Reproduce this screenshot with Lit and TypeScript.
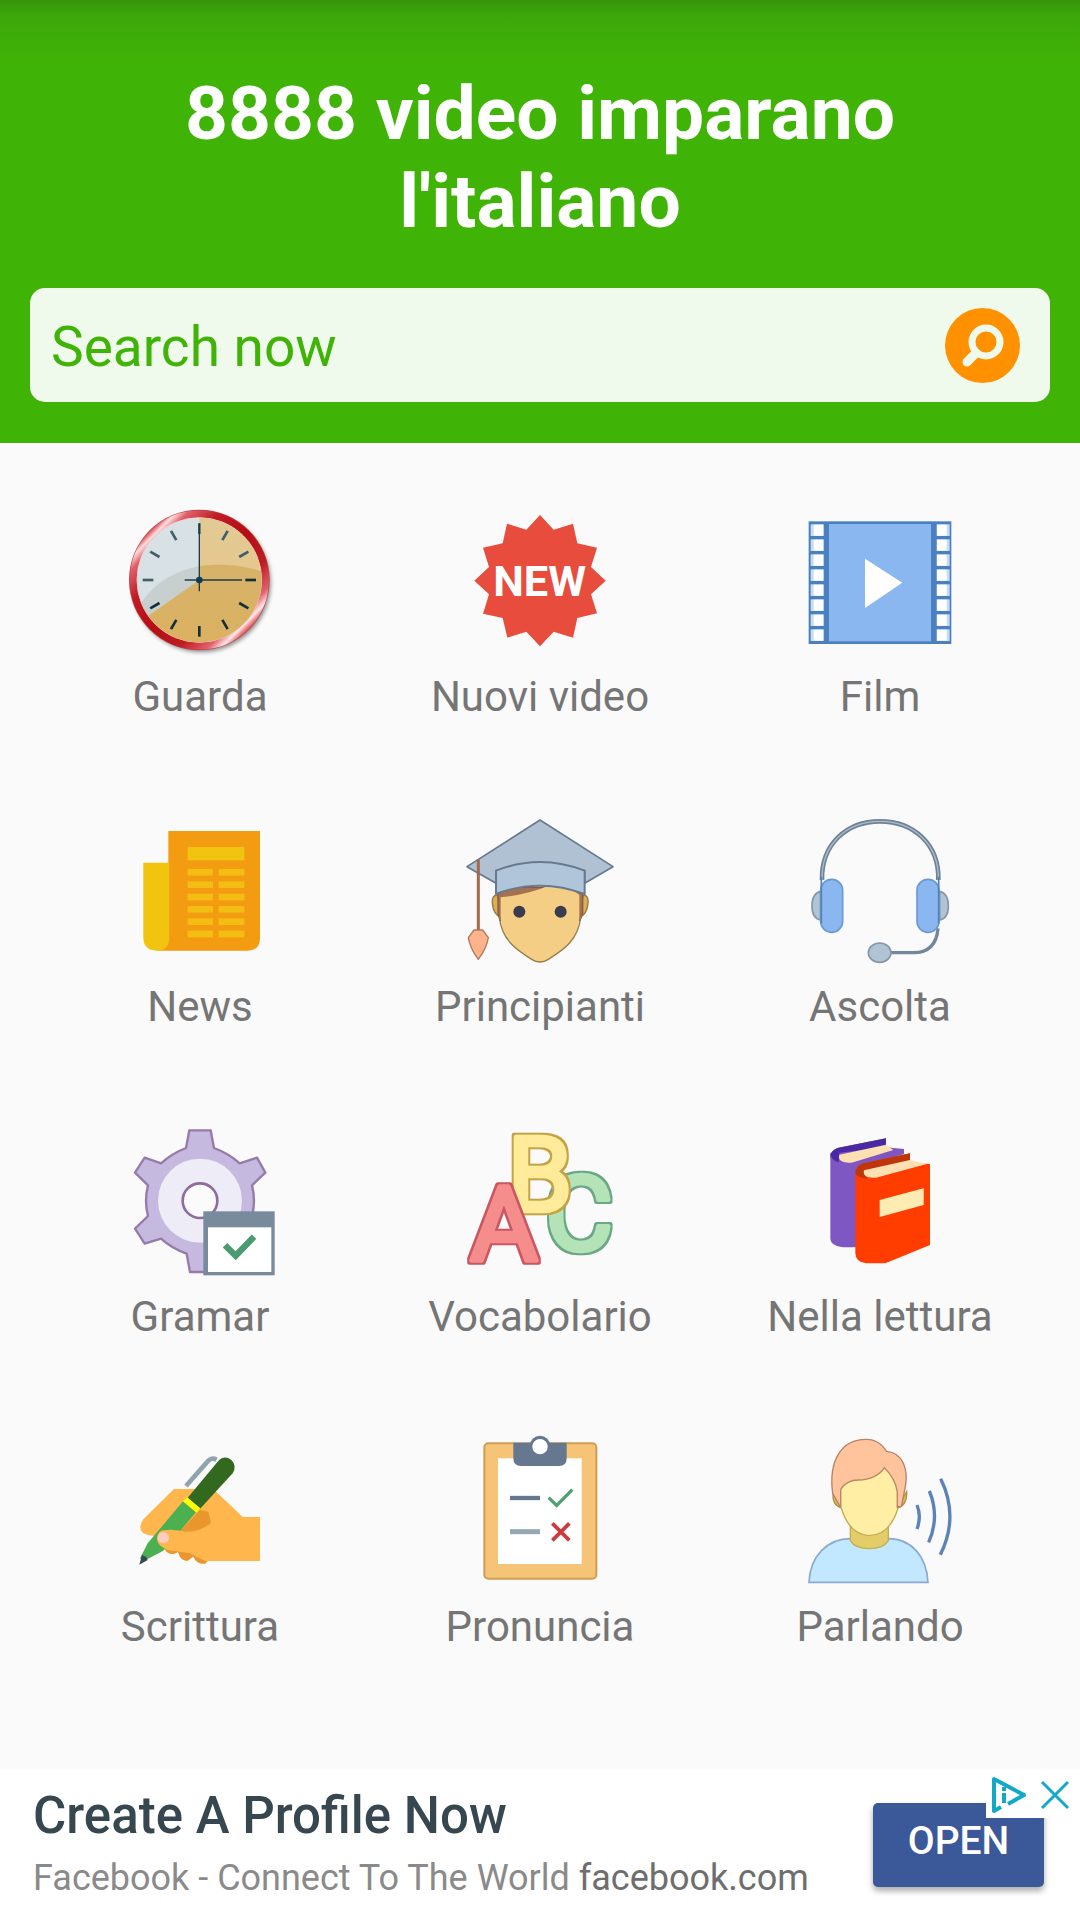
import { LitElement, html, css, svg, SVGTemplateResult } from "lit";
import { customElement } from "lit/decorators.js";

interface Topic {
  label: string;
  art: SVGTemplateResult;
}

const hours = [0, 30, 60, 90, 120, 150, 180, 210, 240, 270, 300, 330];

const clock = svg`
  <defs>
    <linearGradient id="rim" x1="0" y1="0" x2="1" y2="1">
      <stop offset=".13" stop-color="#e2606a"/><stop offset=".155" stop-color="#ffdede"/>
      <stop offset=".2" stop-color="#e0606a"/><stop offset=".32" stop-color="#c01c24"/>
      <stop offset=".5" stop-color="#b50d14"/><stop offset=".68" stop-color="#c01c24"/>
      <stop offset=".79" stop-color="#e0606a"/><stop offset=".84" stop-color="#ffe8e8"/>
      <stop offset=".87" stop-color="#e2606a"/>
    </linearGradient>
    <linearGradient id="sand" x1="0" y1="0" x2="0" y2="1">
      <stop offset="0" stop-color="#d9b873"/><stop offset="1" stop-color="#e3b663"/>
    </linearGradient>
    <filter id="soft" x="-20%" y="-20%" width="140%" height="140%"><feGaussianBlur stdDeviation="6"/></filter>
    <clipPath id="dial"><circle cx="298" cy="270" r="187"/></clipPath>
  </defs>
  <circle cx="304" cy="278" r="208" fill="#000" opacity=".45" filter="url(#soft)"/>
  <circle cx="298" cy="270" r="211" fill="#b9474c"/>
  <circle cx="298" cy="270" r="197" fill="none" stroke="url(#rim)" stroke-width="23"/>
  <circle cx="298" cy="270" r="187" fill="#ccd8de" stroke="#f3c9c9" stroke-width="3"/>
  <g clip-path="url(#dial)">
    <path d="M298 270V70H500V470H200L144 378Z" fill="url(#sand)"/>
    <path d="M100 380C150 270 250 225 350 224C400 224 450 230 500 250V60H100Z" fill="#fff" opacity=".24"/>
    <path d="M100 380C150 270 250 225 350 224C400 224 450 230 500 250V480H100Z" fill="#a08a50" opacity=".1"/>
  </g>
  ${hours.map(a => svg`<path d="M298 100V132" transform="rotate(${a} 298 270)" stroke="${a > 260 || a < 80 ? "#3f6068" : "#13303a"}" stroke-width="8"/>`)}
  <path d="M298 100V304M254 270H426" stroke="#1c3c48" stroke-width="4" fill="none"/>
  <circle cx="298" cy="270" r="10" fill="#0d3a55"/>`;

const starPoints = Array.from({ length: 24 }, (_, i) => {
  const r = i % 2 ? 158 : 197;
  const a = (i * Math.PI) / 12;
  return `${Math.round(300 + r * Math.sin(a))},${Math.round(272 - r * Math.cos(a))}`;
}).join(" ");

const fresh = svg`
  <polygon points="${starPoints}" fill="#e74c3c"/>
  <text x="299" y="319" text-anchor="middle" font-family="Roboto, sans-serif" font-weight="700" font-size="130" fill="#fff">NEW</text>`;

const film = svg`
  <rect x="86" y="94" width="428" height="368" fill="#4a80be"/>
  <rect x="147" y="102" width="306" height="352" fill="#8bb7f0"/>
  ${[0, 1, 2, 3, 4, 5, 6, 7].map(i => svg`
    <rect x="92" y="${103 + i * 45}" width="39" height="35" fill="#c8dcf3"/><rect x="101" y="${104 + i * 45}" width="29" height="33" fill="#fff"/>
    <rect x="470" y="${103 + i * 45}" width="39" height="35" fill="#c8dcf3"/><rect x="471" y="${104 + i * 45}" width="29" height="33" fill="#fff"/>`)}
  <path d="M255 206L367 278L255 354Z" fill="#fff"/>`;

const news = svg`
  <path d="M205 93H480V414Q480 452 442 452H170L205 400Z" fill="#f39c12"/>
  <path d="M130 188H208V412Q208 452 170 452Q130 452 130 412Z" fill="#f1c40f"/>
  <rect x="263" y="141" width="170" height="40" fill="#f1c40f"/>
  ${[0, 1, 2, 3, 4, 5].map(i => svg`
    <rect x="263" y="${207 + i * 37}" width="76" height="20" fill="#f3bd13"/>
    <rect x="356" y="${207 + i * 37}" width="77" height="20" fill="#f3bd13"/>`)}`;

const student = svg`
  <path d="M172 285Q155 285 157 310Q160 345 184 352ZM430 285Q446 285 444 310Q441 345 417 352Z" fill="#dbb052" stroke="#957c49" stroke-width="4"/>
  <path d="M174 262H428V340L420 362H180L174 340Z" fill="#a6714e" stroke="#8a5a40" stroke-width="4"/>
  <path d="M182 292Q260 285 330 256Q390 258 418 285V350C416 420 370 450 325 478Q300 494 275 478C230 450 186 420 182 350Z" fill="#f5ce85"/>
  <path d="M178 350C184 420 230 450 275 478Q300 494 325 478C370 450 416 420 422 350" fill="none" stroke="#957c49" stroke-width="4"/>
  <circle cx="238" cy="335" r="18" fill="#3a3c4e"/><circle cx="362" cy="335" r="18" fill="#3a3c4e"/>
  <path d="M300 60L519 200L434 250V212H168V250L81 200Z" fill="#b0c1d4" stroke="#66798f" stroke-width="5" stroke-linejoin="round"/>
  <path d="M168 212Q300 160 434 212V282Q300 232 168 282Z" fill="#b0c5d9" stroke="#66798f" stroke-width="6" stroke-linejoin="round"/>
  <path d="M115 178V390" stroke="#a16a4a" stroke-width="9"/>
  <path d="M102 390H128L145 413Q140 445 115 478Q90 445 85 413Z" fill="#ffb38a" stroke="#b07a5c" stroke-width="4" stroke-linejoin="round"/>`;

const headset = svg`
  <path d="M126 240C124 132 200 64 300 64S478 132 475 240" fill="none" stroke="#6f8296" stroke-width="14"/>
  <path d="M126 240C124 132 200 64 300 64S478 132 475 240" fill="none" stroke="#a9bccd" stroke-width="4"/>
  <path d="M122 274Q96 280 96 318T122 360ZM479 274Q505 280 505 318T479 360Z" fill="#b0c4d6" stroke="#8597a9" stroke-width="5"/>
  <rect x="122" y="238" width="66" height="159" rx="33" fill="#8bb7f0" stroke="#6a9ad6" stroke-width="5"/>
  <rect x="411" y="238" width="66" height="159" rx="33" fill="#8bb7f0" stroke="#6a9ad6" stroke-width="5"/>
  <path d="M124 230V370M476 230V370" stroke="#5580b4" stroke-width="5"/>
  <path d="M474 385Q468 458 400 458H328" fill="none" stroke="#73879a" stroke-width="10"/>
  <ellipse cx="299" cy="458" rx="34" ry="29" fill="#b0c4d6" stroke="#8597a9" stroke-width="5"/>`;

const grammar = svg`
  <path d="M268 61H332L342 114Q386 130 419 160L471 143L496 188L456 226Q468 272 456 318L496 356L471 401L419 386Q386 416 342 431L332 486H270L260 431Q216 416 183 386L134 401L105 356L144 318Q132 272 144 226L105 188L134 143L183 160Q216 130 258 114Z" fill="#c5b9e0" stroke="#977aa8" stroke-width="7" stroke-linejoin="round"/>
  <circle cx="300" cy="272" r="126" fill="#eeecf7"/>
  <circle cx="300" cy="272" r="52" fill="#fbfbfb" stroke="#8e6c9c" stroke-width="8"/>
  <rect x="310" y="304" width="214" height="192" fill="#788b9c"/>
  <rect x="324" y="352" width="190" height="134" fill="#fff"/>
  <path d="M375 406L407 437L462 380" fill="none" stroke="#4a9c70" stroke-width="19"/>`;

const edge = (id: string, color: string) => svg`
  <filter id=${id} x="-20%" y="-20%" width="140%" height="140%" color-interpolation-filters="sRGB">
    <feMorphology in="SourceAlpha" operator="dilate" radius="6" result="grown"/>
    <feFlood flood-color=${color}/>
    <feComposite in2="grown" operator="in" result="outline"/>
    <feMerge><feMergeNode in="outline"/><feMergeNode in="SourceGraphic"/></feMerge>
  </filter>`;

const vocabulary = svg`
  <defs>${edge("edge-c", "#6aa784")}${edge("edge-b", "#c3a345")}${edge("edge-a", "#cb5560")}</defs>
  <g font-family="Roboto, sans-serif" font-weight="400" font-size="312" text-anchor="middle" stroke-linejoin="round" stroke-width="14">
    <text x="417" y="419" fill="#b5e3b8" stroke="#b5e3b8" filter="url(#edge-c)">C</text>
    <text x="300" y="303" fill="#ffeb9a" stroke="#ffeb9a" filter="url(#edge-b)">B</text>
    <text x="192" y="451" fill="#f58d8d" stroke="#f58d8d" filter="url(#edge-a)">A</text>
  </g>`;

const books = svg`
  <path d="M151 128L230 150V412H190Q151 408 151 385Z" fill="#7e57c2"/>
  <path d="M151 145Q150 122 172 114L318 85V112L372 117L372 132L230 175L190 158Q170 156 151 145Z" fill="#7e57c2"/>
  <path d="M151 145Q150 122 172 114L318 85V112L178 128L176 157Q152 150 151 128Z" fill="#4a2aa2"/>
  <path d="M178 134L318 104L340 120L215 158Q170 158 178 134Z" fill="#ffe0b2"/>
  <path d="M226 188Q227 168 250 160L390 130V160L450 162V405L316 460H258Q226 456 226 430Z" fill="#ff3d00"/>
  <path d="M226 188Q227 168 250 160L390 130V156L252 180L262 207Q226 200 226 188Z" fill="#bf360c"/>
  <path d="M252 181L390 150L440 162L288 203Q246 206 252 181Z" fill="#ffe0b2"/>
  <path d="M299 270L431 235V285L299 321Z" fill="#ffecb3"/>`;

const writing = svg`
  <path d="M190 380Q200 405 222 402L234 396Q240 422 262 423L280 410Q290 434 316 431L330 415L300 380Z" fill="#e9962d"/>
  <path d="M222 207H340L428 291H480V423H316Q290 412 270 400L205 390Q165 375 172 348Q150 350 130 340Q112 325 130 298Z" fill="#ffb74d"/>
  <path d="M300 270L325 275L333 308Q300 340 240 334Z" fill="#e9962d"/>
  <path d="M258 198L325 122Q335 112 350 119" fill="none" stroke="#90a4ae" stroke-width="14"/>
  <path d="M263 233L353 125Q372 103 394 120Q412 138 398 160L299 268Z" fill="#33691e"/>
  <path d="M249 244L288 277L190 392L130 424L120 415L143 370Z" fill="#4caf50"/>
  <path d="M249 244L261 232L301 265L290 278Z" fill="#ffff00"/>
  <path d="M126 405Q140 408 143 420L118 434Z" fill="#37474f"/>
  <path d="M190 331Q230 325 270 340L300 360L285 400L205 390Q165 375 172 348Q176 333 190 331Z" fill="#ffb74d"/>
  <circle cx="190" cy="353" r="17" fill="#ffcdc0"/>`;

const checklist = svg`
  <rect x="133" y="70" width="336" height="406" rx="12" fill="#f5c476" stroke="#cf9d56" stroke-width="6"/>
  <rect x="174" y="115" width="251" height="317" fill="#fff"/>
  <path d="M220 68H380V115Q380 138 357 138H243Q220 138 220 115Z" fill="#66788f"/>
  <circle cx="300" cy="77" r="30" fill="#66788f"/><circle cx="300" cy="80" r="23" fill="#fff"/>
  <path d="M210 234H300" stroke="#66788f" stroke-width="13"/><path d="M210 335H300" stroke="#94a8b3" stroke-width="15"/>
  <path d="M326 233L350 256L397 209" fill="none" stroke="#4fa26f" stroke-width="10"/>
  <path d="M337 310L388 361M388 310L337 361" stroke="#d0383d" stroke-width="11"/>`;

const speaker = svg`
  <path d="M160 215Q154 255 184 264ZM380 215Q382 255 352 264Z" fill="#d9be50" stroke="#a99545" stroke-width="4"/>
  <path d="M87 487C90 410 140 356 212 356H325C395 356 440 410 444 487Z" fill="#c2e8ff" stroke="#8ba9d3" stroke-width="5"/>
  <path d="M211 310V362Q225 386 268 386T325 362V310Z" fill="#e3cd68" stroke="#c5ad53" stroke-width="4"/>
  <path d="M158 220C145 120 185 58 258 58C295 58 310 80 320 94C370 98 385 150 376 200L364 260H180Z" fill="#ffc49c" stroke="#b98069" stroke-width="4"/>
  <path d="M184 205Q200 180 235 180C270 180 300 165 313 143Q348 175 350 205V270Q330 347 268 347Q208 340 184 265Z" fill="#ffeea3"/>
  <path d="M182 262V208Q200 180 235 180C270 180 300 165 313 143Q346 175 352 215V262" fill="none" stroke="#b88966" stroke-width="4"/>
  <path d="M184 264Q208 345 268 347Q330 345 354 264" fill="none" stroke="#c5ad53" stroke-width="4"/>
  <g fill="none" stroke="#5b82b9" stroke-width="10"><path d="M411 255Q425 290 411 327"/><path d="M448 213Q480 290 446 367"/><path d="M482 176Q538 290 481 404"/></g>`;

const topics: Topic[] = [
  { label: "Guarda", art: clock },
  { label: "Nuovi video", art: fresh },
  { label: "Film", art: film },
  { label: "News", art: news },
  { label: "Principianti", art: student },
  { label: "Ascolta", art: headset },
  { label: "Gramar", art: grammar },
  { label: "Vocabolario", art: vocabulary },
  { label: "Nella lettura", art: books },
  { label: "Scrittura", art: writing },
  { label: "Pronuncia", art: checklist },
  { label: "Parlando", art: speaker },
];

@customElement("app-root")
export class AppRoot extends LitElement {
  static styles = css`
    :host { display: flex; flex-direction: column; min-height: 100vh; background: #fafafa; font-family: Roboto, sans-serif; }
    button, input { font: inherit; border: 0; padding: 0; margin: 0; background: none; }
    button { cursor: pointer; }
    svg { display: block; overflow: visible; }
    .header { background: linear-gradient(#36940a 0, #3ca80a 16px, #40b307 64px); padding: 69px 30px 41px; }
    .title { margin: 0 auto 43px; max-width: 840px; text-align: center; color: #fff; font-size: 75px; line-height: 88px; font-weight: 700; }
    .search { display: flex; align-items: center; background: #f0faec; border-radius: 15px; padding: 0 30px 0 21px; height: 114px; }
    .field { flex: 1; min-width: 0; padding-top: 4px; font-size: 55px; line-height: 64px; color: #40b307; outline: none; }
    .field::placeholder { color: #40b307; opacity: 1; }
    .go { width: 75px; height: 75px; border-radius: 50%; background: #ff9100; }
    .topics { flex: 1; display: grid; grid-template-columns: repeat(3, 1fr); align-content: start; row-gap: 97px; padding: 65px 30px; }
    .topic { display: flex; flex-direction: column; align-items: center; gap: 20px; text-decoration: none; color: #757575; font-size: 42px; line-height: 49px; }
    .ad { position: relative; display: flex; justify-content: space-between; align-items: flex-start; background: #fff; padding: 15px 36px 15px 33px; }
    .copy { display: flex; flex-direction: column; gap: 3px; text-decoration: none; }
    .headline { font-size: 51px; line-height: 64px; font-weight: 500; color: #37474f; }
    .line { font-size: 36px; line-height: 54px; color: #8a8a8a; }
    .site { color: #6e6e6e; }
    .open { margin-top: 19px; width: 171px; height: 84px; padding-bottom: 9px; border-radius: 5px; background: #3b5998; color: #fff; font-size: 39px; font-weight: 500; box-shadow: 0 4px 6px #0005; }
    .choices { position: absolute; top: 0; right: 0; display: flex; align-items: center; gap: 14px; background: #fff; padding: 7px 11px 5px 5px; }
  `;

  render() {
    return html`
      <header class="header">
        <h1 class="title">8888 video imparano l'italiano</h1>
        <form class="search" role="search" @submit=${(e: Event) => e.preventDefault()}>
          <input class="field" type="text" placeholder="Search now" aria-label="Search now">
          <button class="go" type="submit" aria-label="Search">
            <svg width="75" height="75" viewBox="0 0 75 75" fill="none" stroke="#f0faec">
              <circle cx="41" cy="34" r="14" stroke-width="7"/>
              <path d="M31 45L22 54" stroke-width="9" stroke-linecap="round"/>
            </svg>
          </button>
        </form>
      </header>
      <main class="topics">
        ${topics.map(t => html`
          <a class="topic" href="#">
            <svg width="144" height="144" viewBox="84 54 432 432" aria-hidden="true">${t.art}</svg>
            <span>${t.label}</span>
          </a>`)}
      </main>
      <aside class="ad">
        <a class="copy" href="#">
          <span class="headline">Create A Profile Now</span>
          <span class="line">Facebook - Connect To The World <span class="site">facebook.com</span></span>
        </a>
        <button class="open" type="button">OPEN</button>
        <div class="choices">
          <button type="button" aria-label="Ad choices">
            <svg width="36" height="37" viewBox="0 0 36 37" fill="none" stroke="#12a9c9" stroke-width="4" stroke-linejoin="round">
              <path d="M10 31L3 35V3L33 19L17 28"/>
              <path d="M13 17V27"/><path d="M13 11V15"/>
            </svg>
          </button>
          <button type="button" aria-label="Close ad">
            <svg width="28" height="28" viewBox="0 0 28 28" fill="none" stroke="#12a9c9" stroke-width="3"><path d="M1 1L27 27M27 1L1 27"/></svg>
          </button>
        </div>
      </aside>`;
  }
}
